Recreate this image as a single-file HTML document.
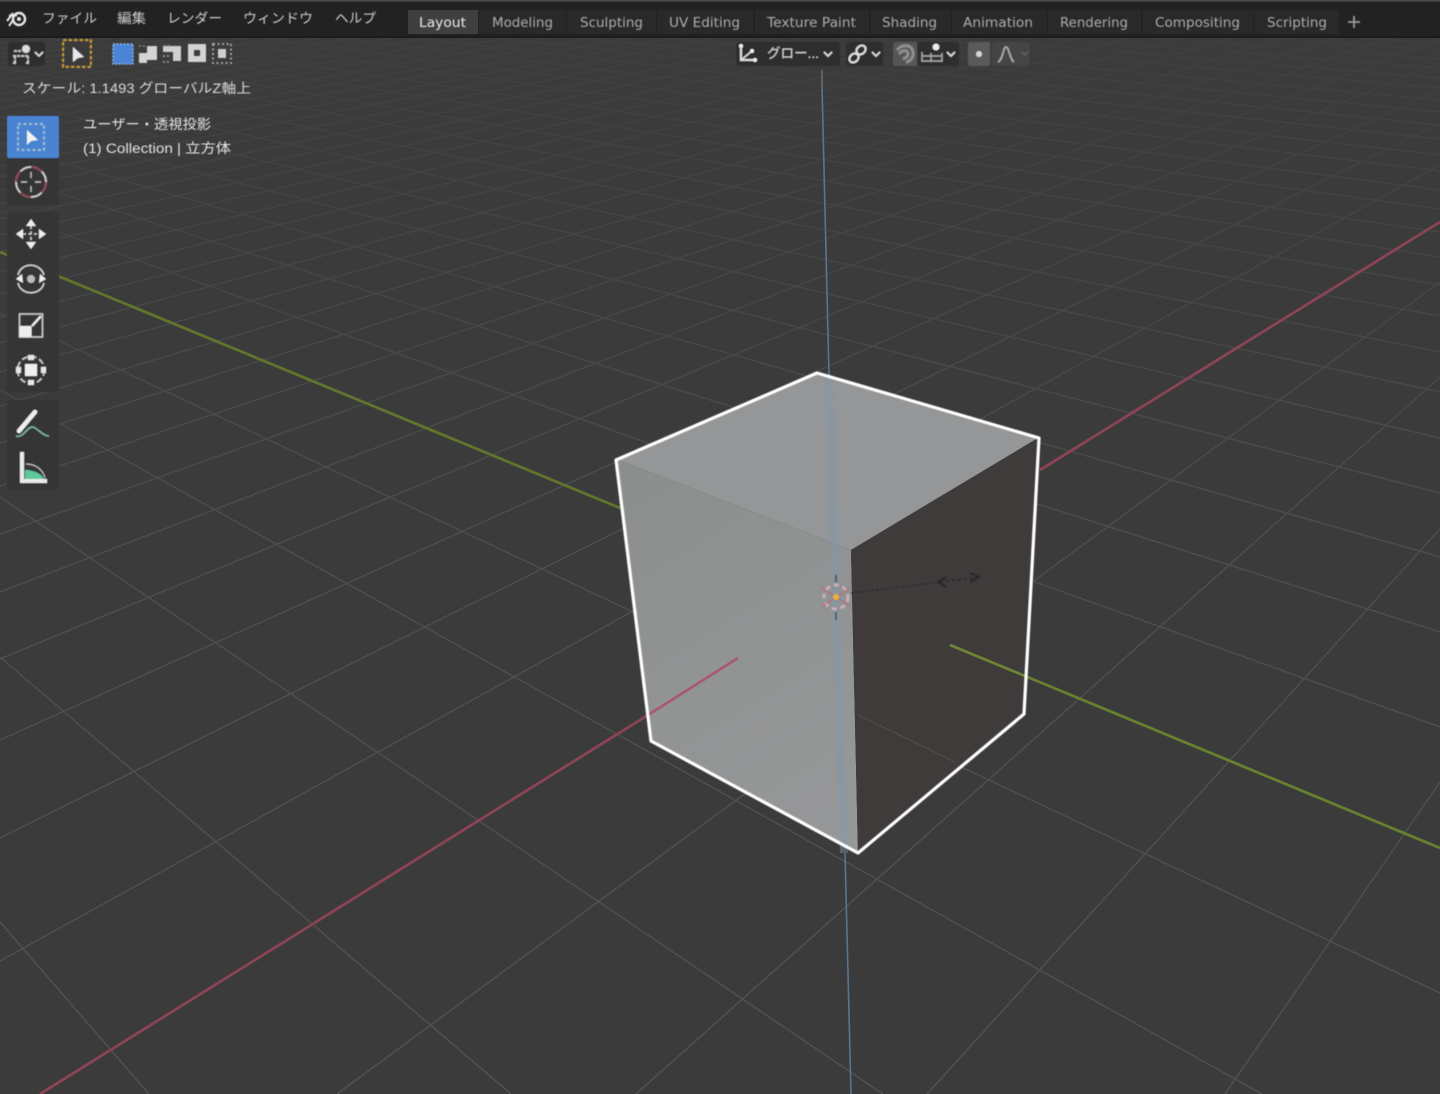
<!DOCTYPE html>
<html lang="ja"><head><meta charset="utf-8"><title>Blender</title>
<style>
html,body{margin:0;padding:0;background:#3b3b3b;width:1440px;height:1094px;overflow:hidden}
svg{display:block}
text{font-family:"DejaVu Sans","Liberation Sans","Noto Sans CJK JP",sans-serif}
.jp{font-family:"Liberation Sans","Noto Sans CJK JP",sans-serif}
</style></head><body>
<svg xmlns="http://www.w3.org/2000/svg" width="1440" height="1094" viewBox="0 0 1440 1094">
<defs>
<linearGradient id="f" x1="0" y1="0" x2="0" y2="1094" gradientUnits="userSpaceOnUse">
<stop offset="0.03" stop-color="#fff" stop-opacity=".15"/><stop offset="0.2" stop-color="#fff" stop-opacity=".42"/><stop offset="0.5" stop-color="#fff" stop-opacity=".85"/><stop offset="1" stop-color="#fff"/>
</linearGradient>
<mask id="m" maskUnits="userSpaceOnUse" x="0" y="0" width="1440" height="1094"><rect width="1440" height="1094" fill="url(#f)"/></mask>
<linearGradient id="lf" x1="616" y1="459" x2="858" y2="853" gradientUnits="userSpaceOnUse"><stop offset="0" stop-color="#8c8e8e"/><stop offset="1" stop-color="#979899"/></linearGradient>
<filter id="b" x="-5%" y="-5%" width="110%" height="110%"><feGaussianBlur stdDeviation=".6"/></filter>
<filter id="b2" x="-5%" y="-5%" width="110%" height="110%"><feGaussianBlur stdDeviation=".4"/></filter>
</defs>
<rect width="1440" height="1094" fill="#3b3b3b"/>
<g mask="url(#m)" fill="none" stroke="#525252" stroke-width="1.4">
<path d="M0 922L149 1094M0 657L511 1094M0 497L883 1094M0 390L1262 1094M0 313L1440 993M0 211L1440 727M0 174L1440 632M0 145L1440 557M0 121L1440 493M0 99L1440 438M0 82L1440 392M0 66L1440 352M0 53L1440 316M0 41L1440 285M0 30L1440 257M65 30L1440 232M134 30L1440 209M201 30L1440 190M274 30L1440 171M345 30L1440 155M423 30L1440 139M503 30L1440 125M585 30L1440 112M669 30L1440 100M761 30L1440 88M851 30L1440 78M942 30L1440 68M1040 30L1440 59M1149 30L1440 50M1242 30L1440 43M1358 30L1440 35"/>
<path d="M1440 782L1225 1094M1440 529L927 1094M1440 377L636 1094M1440 282L337 1094M1440 165L0 961M1440 123L0 838M1440 90L0 740M1440 62L0 659M1440 39L0 592M1410 30L0 534M1358 30L0 486M1307 30L0 443M1257 30L0 406M1206 30L0 372M1158 30L0 343M1111 30L0 317M1064 30L0 294M1018 30L0 272M971 30L0 252M928 30L0 235M884 30L0 219M841 30L0 204M797 30L0 190M756 30L0 177M717 30L0 166M673 30L0 154M636 30L0 144M594 30L0 134M556 30L0 125M520 30L0 117M480 30L0 108M443 30L0 101M406 30L0 94M372 30L0 87M339 30L0 81M300 30L0 74M266 30L0 69M235 30L0 64M200 30L0 58M167 30L0 53M136 30L0 48M103 30L0 44"/>
</g>
<!-- axes -->
<g fill="none" stroke-linecap="butt">
<path d="M40 1094L648 715M1040 470L1440 222" stroke="#8a4453" stroke-width="2.8"/>
<path d="M0 252L620 508" stroke="#5f752e" stroke-width="2.8"/>
<path d="M1025 676L1440 848" stroke="#66802f" stroke-width="2.8"/>
<path d="M822 70L822 86" stroke="#6e7378" stroke-width="1.4"/>
<path d="M822 86L829 376M845 853L851 1094" stroke="#587590" stroke-width="1.6"/>
</g>
<!-- cube -->
<polygon points="817,373 1038,438 851,550 616,459" fill="#949697"/>
<polygon points="616,459 851,550 858,853 651,741" fill="url(#lf)"/>
<polygon points="1038,438 1023,713 858,853 851,550" fill="#403b3b"/>
<path d="M829 376L844 853" stroke="#7f98af" stroke-width="8" opacity=".42" fill="none"/>
<path d="M648 715L738 658" stroke="#a85a6c" stroke-width="2.6" fill="none"/>
<path d="M950 645L1025 676" stroke="#6e8634" stroke-width="2.6" fill="none"/>
<path d="M858 715L955 762" stroke="#514d4d" stroke-width="1.2" fill="none"/>
<polygon points="817,373 1039,438 1024,714 858,853 651,741 616,460" fill="none" stroke="#fff" stroke-width="3.2" stroke-linejoin="round" filter="url(#b2)"/>
<!-- light -->
<g fill="none" filter="url(#b2)">
<path d="M851 593L940 582" stroke="#2a2a2a" stroke-width="1.3" stroke-dasharray="3 2"/>
<path d="M940 582L976 578" stroke="#222" stroke-width="1.1" stroke-dasharray="3 3"/>
<path d="M946 577L938 582L946 587M970 573L979 577L970 582" stroke="#222" stroke-width="1.4"/>
<circle cx="836" cy="597" r="12" stroke="#d8b4b4" stroke-width="3" stroke-dasharray="5 4" opacity=".85"/>
<path d="M822 606L850 588M822 588L850 606" stroke="#b86a7a" stroke-width="1.2"/>
<path d="M836 612V620M836 575V582" stroke="#444" stroke-width="1.3"/>
<circle cx="836" cy="597" r="3" fill="#e9b436" stroke="none"/>
</g>
<!-- header -->
<rect x="0" y="0" width="1440" height="37" fill="#222"/>
<rect x="0" y="0" width="1440" height="1.5" fill="#4d4d4d"/>
<rect x="0" y="36" width="1440" height="2" fill="#1c1c1c"/>
<g fill="#292929"><rect x="479" y="10" width="87" height="24"/><rect x="567" y="10" width="89" height="24"/><rect x="657" y="10" width="96" height="24"/><rect x="755" y="10" width="114" height="24"/><rect x="871" y="10" width="80" height="24"/><rect x="952" y="10" width="95" height="24"/><rect x="1048" y="10" width="93" height="24"/><rect x="1143" y="10" width="110" height="24"/><rect x="1254" y="10" width="85" height="24"/></g>
<rect x="408" y="10" width="70" height="24" fill="#3f3f3f"/>
<g filter="url(#b)">
<!-- blender logo -->
<g fill="none" stroke="#e8e8e8">
<circle cx="19" cy="19" r="6" stroke-width="2.4"/>
<path d="M9 15.500H17M7 21L13 13M9 26L13 20" stroke-width="2"/>
</g>
<circle cx="19" cy="19" r="2" fill="#e8e8e8"/>
<g fill="#cfcfcf" font-size="13.5" class="jp">
<text class="jp" x="42" y="23" textLength="55" lengthAdjust="spacingAndGlyphs">ファイル</text>
<text class="jp" x="117" y="23" textLength="29" lengthAdjust="spacingAndGlyphs">編集</text>
<text class="jp" x="167" y="23" textLength="55" lengthAdjust="spacingAndGlyphs">レンダー</text>
<text class="jp" x="243" y="23" textLength="70" lengthAdjust="spacingAndGlyphs">ウィンドウ</text>
<text class="jp" x="335" y="23" textLength="41" lengthAdjust="spacingAndGlyphs">ヘルプ</text>
</g>
<text x="419" y="27" font-size="13" fill="#ececec" textLength="47" lengthAdjust="spacingAndGlyphs">Layout</text>
<g font-size="13" fill="#adadad">
<text x="492" y="27" textLength="61" lengthAdjust="spacingAndGlyphs">Modeling</text>
<text x="580" y="27" textLength="63" lengthAdjust="spacingAndGlyphs">Sculpting</text>
<text x="669" y="27" textLength="71" lengthAdjust="spacingAndGlyphs">UV Editing</text>
<text x="767" y="27" textLength="89" lengthAdjust="spacingAndGlyphs">Texture Paint</text>
<text x="882" y="27" textLength="55" lengthAdjust="spacingAndGlyphs">Shading</text>
<text x="963" y="27" textLength="70" lengthAdjust="spacingAndGlyphs">Animation</text>
<text x="1060" y="27" textLength="68" lengthAdjust="spacingAndGlyphs">Rendering</text>
<text x="1155" y="27" textLength="85" lengthAdjust="spacingAndGlyphs">Compositing</text>
<text x="1267" y="27" textLength="60" lengthAdjust="spacingAndGlyphs">Scripting</text>
</g>
<path d="M1348 22H1360M1354 16V28" stroke="#9c9c9c" stroke-width="1.8" fill="none"/>
<!-- row 2 left -->
<rect x="8" y="42" width="37" height="24" rx="3" fill="#2f2f2f"/>
<circle cx="26" cy="49" r="4" fill="#ddd"/>
<path d="M14 51H22M13 56H29M15 56V63M28 56V63M13 63H17M26 63H30" stroke="#cfcfcf" stroke-width="1.8" fill="none" stroke-dasharray="3 1"/>
<path d="M35 52L39 56L43 52" stroke="#ddd" stroke-width="1.6" fill="none"/>
<rect x="63" y="40" width="28" height="27" fill="#3a3a3a" stroke="#c39a36" stroke-width="2" stroke-dasharray="3.5 2"/>
<polygon points="73,47 73,62 78,58 84,57" fill="#e8e8e8"/>
<rect x="113" y="44" width="20" height="20" fill="#4a84d6" stroke="#8db4e8" stroke-width="1.4" stroke-dasharray="2 1.5"/>
<path d="M139 53H147V46H157V60H147V63H139Z" fill="#d4d4d4"/>
<path d="M139 46H147" stroke="#aaa" stroke-dasharray="2 2"/>
<path d="M163 46H181V61H173V52H163Z" fill="#cfcfcf"/>
<path d="M163 56H171M163 62H171M164 46H170" stroke="#999" stroke-width="1.8" stroke-dasharray="2 2"/>
<path d="M188 44H206V62H188ZM194 50V56H200V50Z" fill="#d4d4d4" fill-rule="evenodd"/>
<rect x="213" y="44" width="18" height="19" fill="none" stroke="#a5a5a5" stroke-width="2" stroke-dasharray="2 2.5"/>
<rect x="218" y="49" width="8" height="9" fill="#cfcfcf"/>
<!-- row 2 centre -->
<rect x="736" y="42" width="104" height="24" rx="3" fill="#2e2e2e"/>
<path d="M741 46V60H755" stroke="#ddd" stroke-width="2" fill="none"/>
<path d="M741 60L752 51" stroke="#ddd" stroke-width="1.6" fill="none"/>
<circle cx="741" cy="46" r="2" fill="#eee"/><circle cx="755" cy="60" r="2" fill="#eee"/><circle cx="752" cy="51" r="2" fill="#eee"/>
<text class="jp" x="767" y="58" font-size="13.5" fill="#d4d4d4" textLength="52" lengthAdjust="spacingAndGlyphs">グロー...</text>
<path d="M824 52L828 56L832 52" stroke="#ddd" stroke-width="1.7" fill="none"/>
<rect x="846" y="42" width="37" height="24" rx="3" fill="#2e2e2e"/>
<g fill="none" stroke="#e0e0e0" stroke-width="2"><ellipse cx="854" cy="58" rx="5" ry="4" transform="rotate(-40 854 58)"/><ellipse cx="861" cy="50" rx="5" ry="4" transform="rotate(-40 861 50)"/></g>
<path d="M872 52L876 56L880 52" stroke="#ddd" stroke-width="1.7" fill="none"/>
<rect x="893" y="42" width="24" height="24" rx="2" fill="#565656"/>
<path d="M897 50C902 44 912 44 913 52C914 58 909 62 906 62M899 54C903 49 908 50 908 54C908 57 905 58 903 59" stroke="#8f8f8f" stroke-width="3" fill="none"/>
<rect x="918" y="42" width="41" height="24" rx="3" fill="#2e2e2e"/>
<circle cx="936" cy="47" r="3.4" fill="#eee"/>
<path d="M922 56H942M922 52V62M931 53V62M942 53V62M922 61H942" stroke="#aaa" stroke-width="1.4" fill="none"/>
<path d="M947 52L951 56L955 52" stroke="#ddd" stroke-width="1.7" fill="none"/>
<rect x="968" y="42" width="22" height="24" rx="2" fill="#5a5a5a"/>
<circle cx="979" cy="54" r="3" fill="#d8d8d8"/>
<rect x="992" y="42" width="38" height="24" rx="3" fill="#444"/>
<path d="M998 62C1003 60 1003 47 1006 47C1009 47 1010 60 1014 62" stroke="#a8a8a8" stroke-width="1.8" fill="none"/>
<path d="M1022 52L1025 55L1028 52" stroke="#666" stroke-width="1.4" fill="none"/>
<!-- overlay text -->
<text class="jp" x="22" y="93" font-size="13.5" fill="#dcdcdc" textLength="229" lengthAdjust="spacingAndGlyphs">スケール: 1.1493 グローバルZ軸上</text>
<text class="jp" x="83" y="129" font-size="13.5" fill="#e6e6e6" textLength="128" lengthAdjust="spacingAndGlyphs">ユーザー・透視投影</text>
<text class="jp" x="83" y="153" font-size="13.5" fill="#e6e6e6" textLength="148" lengthAdjust="spacingAndGlyphs">(1) Collection | 立方体</text>
<!-- toolbar -->
<rect x="7" y="115" width="52" height="90" rx="4" fill="#343434"/>
<rect x="7" y="212" width="52" height="180" rx="4" fill="#343434"/>
<rect x="7" y="400" width="52" height="90" rx="4" fill="#343434"/>
<rect x="7" y="116" width="52" height="42" rx="2" fill="#4a84d0"/>
<rect x="18" y="124" width="26" height="26" fill="none" stroke="#9dbad6" stroke-width="2" stroke-dasharray="3 2.5"/>
<polygon points="27,130 27,145 31,141 38,140" fill="#f2f2f2"/>
<circle cx="31" cy="182" r="15" fill="none" stroke="#d0d0d0" stroke-width="1.8"/>
<circle cx="31" cy="182" r="15" fill="none" stroke="#8f4050" stroke-width="1.8" stroke-dasharray="11.8 11.8"/>
<path d="M31 172V178M31 186V192M21 182H27M35 182H41" stroke="#bdbdbd" stroke-width="1.4" fill="none"/>
<g fill="#eee"><polygon points="31,219 26,226 36,226"/><polygon points="31,249 26,242 36,242"/><polygon points="16,234 23,229 23,239"/><polygon points="46,234 39,229 39,239"/></g>
<path d="M31 226V242M23 234H39" stroke="#cfcfcf" stroke-width="1.6" stroke-dasharray="3 2.5" fill="none"/>
<circle cx="31" cy="279" r="4" fill="#bbb"/>
<path d="M18 275C21 262 40 262 44 275M44 283C41 296 21 296 18 283" stroke="#d0d0d0" stroke-width="1.6" fill="none"/>
<polygon points="16,279 22,274 23,283" fill="#eee"/><polygon points="46,279 40,274 39,283" fill="#eee"/>
<rect x="19.500" y="314" width="23" height="23" fill="none" stroke="#cfcfcf" stroke-width="1.5"/>
<rect x="19.500" y="326" width="12" height="11" fill="#eee"/>
<path d="M32 326L41 316" stroke="#eee" stroke-width="2.4"/>
<circle cx="31" cy="370" r="13.500" fill="none" stroke="#cfcfcf" stroke-width="1.6" stroke-dasharray="6 3"/>
<rect x="25" y="364" width="12" height="12" fill="#eee"/>
<g fill="#e6e6e6"><rect x="28" y="355" width="6" height="5"/><rect x="28" y="380" width="6" height="5"/><rect x="16" y="367" width="5" height="6"/><rect x="41" y="367" width="5" height="6"/></g>
<path d="M19 431L35 412" stroke="#eee" stroke-width="4.500" stroke-linecap="round"/>
<path d="M16 436C24 439 28 423 35 428C40 431 44 436 49 436" stroke="#7db5a0" stroke-width="1.6" fill="none"/>
<path d="M22 452V481H47" stroke="#ebebeb" stroke-width="4" fill="none"/>
<path d="M25 470C34 470 42 474 44 479H25Z" fill="#5fc89a"/>
<path d="M26 464C36 464 43 470 45 478" stroke="#bbb" stroke-width="1.2" fill="none"/>
</g>
</svg>
</body></html>
